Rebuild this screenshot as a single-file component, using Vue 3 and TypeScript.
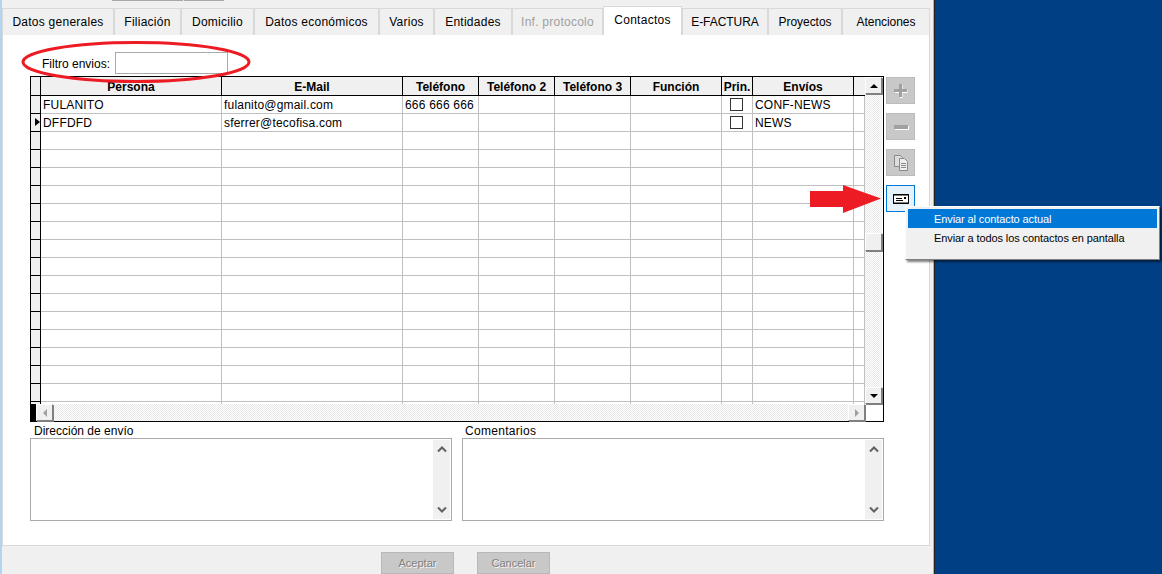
<script setup lang="ts">
interface Contact {
  persona: string
  email: string
  tel: string
  envios: string
  check: boolean
  current: boolean
}

const tabs = [
  { label: 'Datos generales', width: 112 },
  { label: 'Filiación', width: 67 },
  { label: 'Domicilio', width: 73 },
  { label: 'Datos económicos', width: 125 },
  { label: 'Varios', width: 55 },
  { label: 'Entidades', width: 78 },
  { label: 'Inf. protocolo', width: 91, disabled: true },
  { label: 'Contactos', width: 79, active: true },
  { label: 'E-FACTURA', width: 86, tight: true },
  { label: 'Proyectos', width: 74, tight: true },
  { label: 'Atenciones', width: 88, tight: true },
]

const headers = ['Persona', 'E-Mail', 'Teléfono', 'Teléfono 2', 'Teléfono 3', 'Función', 'Prin.', 'Envíos', '']

const filled: Contact[] = [
  { persona: 'FULANITO', email: 'fulanito@gmail.com', tel: '666 666 666', envios: 'CONF-NEWS', check: true, current: false },
  { persona: 'DFFDFD', email: 'sferrer@tecofisa.com', tel: '', envios: 'NEWS', check: true, current: true },
]
const blank: Contact = { persona: '', email: '', tel: '', envios: '', check: false, current: false }
const rows: Contact[] = [...filled, ...Array.from({ length: 16 }, () => blank)]
</script>

<template>
  <div class="screen">
    <div class="win">
      <div class="topbits"><span class="bit a"></span><span class="bit b"></span></div>
      <div class="tabbar">
        <div
          v-for="t in tabs"
          :key="t.label"
          class="tab"
          :class="{ active: t.active, disabled: t.disabled, tight: t.tight }"
          :style="{ width: t.width + 'px' }"
        >{{ t.label }}</div>
      </div>

      <div class="panel">
        <div class="filter">
          <label class="filter-label">Filtro envios:</label>
          <div class="filter-input"></div>
        </div>

        <div class="middle">
          <div class="gridbox">
            <div class="table">
              <div class="cols head">
                <div class="ind"></div>
                <div v-for="(h, i) in headers" :key="i" class="hcell">{{ h }}</div>
              </div>
              <div v-for="(r, i) in rows" :key="i" class="cols row">
                <div class="ind"><i v-if="r.current" class="pointer"></i></div>
                <div class="cell">{{ r.persona }}</div>
                <div class="cell">{{ r.email }}</div>
                <div class="cell">{{ r.tel }}</div>
                <div class="cell"></div>
                <div class="cell"></div>
                <div class="cell"></div>
                <div class="cell center"><i v-if="r.check" class="check"></i></div>
                <div class="cell">{{ r.envios }}</div>
                <div class="cell"></div>
              </div>
            </div>
            <div class="vscroll">
              <div class="sbtn"><i class="tri up"></i></div>
              <div class="track first"></div>
              <div class="sbtn thumb"></div>
              <div class="track"></div>
              <div class="sbtn"><i class="tri down"></i></div>
            </div>
            <div class="hscroll">
              <div class="hblack"></div>
              <div class="sbtn h"><i class="tri left"></i></div>
              <div class="track"></div>
              <div class="sbtn h"><i class="tri right"></i></div>
            </div>
            <div class="corner"></div>
          </div>

          <div class="side">
            <button class="sidebtn">
              <svg width="16" height="16" viewBox="0 0 16 16">
                <path d="M7 2h2.500v5h5v3h-5v5H7v-5H2V7h5z" fill="#fff" />
                <path d="M6 1h3v5h5v3H9v5H6V9H1V6h5z" fill="#a0a0a0" />
              </svg>
            </button>
            <button class="sidebtn">
              <svg width="16" height="6" viewBox="0 0 16 6">
                <rect x="2" y="2" width="14" height="4" fill="#fff" />
                <rect x="1" y="1" width="14" height="4" fill="#a0a0a0" />
              </svg>
            </button>
            <button class="sidebtn">
              <svg width="16" height="16" viewBox="0 0 16 16">
                <path d="M1.500.5h6l2 2v9h-8z" fill="#ddd" stroke="#8a8a8a" />
                <path d="M6.500 3.500h5l3 3v9h-8z" fill="#eee" stroke="#8a8a8a" />
                <path d="M8 8.500h5M8 10.500h5M8 12.500h5" stroke="#8a8a8a" />
              </svg>
            </button>
            <button class="sidebtn send">
              <svg width="16" height="10" viewBox="0 0 16 10">
                <path d="M.5.500h15v9H.5z" fill="#fff" stroke="#000" />
                <path d="M0 1h16M0 9h16" stroke="#000" />
                <rect x="11" y="3" width="2" height="2" fill="#000" />
                <path d="M3 4.500h6M3 6.500h7" stroke="#000" />
              </svg>
            </button>
          </div>
        </div>

        <div class="memos">
          <div class="memo">
            <div class="memo-label">Dirección de envío</div>
            <div class="memo-box">
              <div class="memo-bar">
                <svg width="10" height="7" viewBox="0 0 10 7"><path d="M1 5.500l4-4 4 4" fill="none" stroke="#606060" stroke-width="2" /></svg>
                <svg width="10" height="7" viewBox="0 0 10 7"><path d="M1 1.500l4 4 4-4" fill="none" stroke="#606060" stroke-width="2" /></svg>
              </div>
            </div>
          </div>
          <div class="memo">
            <div class="memo-label">Comentarios</div>
            <div class="memo-box">
              <div class="memo-bar">
                <svg width="10" height="7" viewBox="0 0 10 7"><path d="M1 5.500l4-4 4 4" fill="none" stroke="#606060" stroke-width="2" /></svg>
                <svg width="10" height="7" viewBox="0 0 10 7"><path d="M1 1.500l4 4 4-4" fill="none" stroke="#606060" stroke-width="2" /></svg>
              </div>
            </div>
          </div>
        </div>
      </div>

      <div class="actions">
        <button class="action">Aceptar</button>
        <button class="action">Cancelar</button>
      </div>
    </div>

    <div class="desktop"></div>

    <svg class="ellipse" width="232" height="44" viewBox="0 0 232 44">
      <ellipse cx="115" cy="21" rx="113" ry="19.500" fill="none" stroke="#ed1c24" stroke-width="3" />
    </svg>

    <svg class="arrow" width="74" height="30" viewBox="0 0 74 30">
      <path d="M1 6h33V0l38 13.500L34 28v-6H1z" fill="#ed1c24" />
    </svg>

    <div class="menu">
      <div class="menu-item selected">Enviar al contacto actual</div>
      <div class="menu-item">Enviar a todos los contactos en pantalla</div>
    </div>
  </div>
</template>

<style>
html,
body {
  margin: 0;
  padding: 0;
}
</style>

<style scoped>
.screen {
  position: relative;
  display: flex;
  width: 1162px;
  height: 574px;
  overflow: hidden;
  font-family: "Liberation Sans", Arial, sans-serif;
  font-size: 12px;
  color: #000;
}
.win {
  box-sizing: border-box;
  width: 935px;
  height: 574px;
  flex: none;
  background: #f0f0f0;
  border-left: 2px solid #b4d4f4;
  border-right: 1px solid #222;
  box-shadow: inset -1px 0 #7cc0ec;
}
.desktop {
  flex: 1;
  background: #003f83;
}
.topbits {
  display: flex;
  gap: 1px;
  height: 1px;
  padding-left: 110px;
}
.bit {
  height: 1px;
  background: #a8a8a8;
}
.bit.a { width: 71px; }
.bit.b { width: 40px; }
.tabbar {
  display: flex;
  align-items: flex-end;
  height: 34px;
}
.tab {
  box-sizing: border-box;
  flex: none;
  height: 27px;
  padding-top: 6px;
  text-align: center;
  white-space: nowrap;
  letter-spacing: 0.25px;
  line-height: 14px;
  background: #f0f0f0;
  border: 1px solid #d9d9d9;
  border-bottom: 0;
}
.tab.tight {
  letter-spacing: -0.05px;
}
.tab.active {
  height: 29px;
  background: #fff;
}
.tab.disabled {
  color: #a0a0a0;
}
.panel {
  box-sizing: border-box;
  width: 928px;
  height: 511px;
  padding: 17px 0 0 27px;
  background: #fff;
  border: 1px solid #d9d9d9;
  border-top: 0;
}
.filter {
  display: flex;
  align-items: center;
  height: 22px;
  padding-left: 12px;
  margin-bottom: 2px;
}
.filter-label {
  width: 73px;
  padding-top: 2px;
}
.filter-input {
  box-sizing: border-box;
  width: 113px;
  height: 22px;
  border: 1px solid #aaa;
  background: #fff;
}
.middle {
  display: flex;
  gap: 2px;
}
.gridbox {
  box-sizing: border-box;
  display: grid;
  grid-template-columns: 834px 18px;
  grid-template-rows: 327px 17px;
  width: 854px;
  height: 346px;
  border: 1px solid #000;
}
.table {
  overflow: hidden;
}
.cols {
  display: grid;
  grid-template-columns: 10px 181px 181px 76px 76px 76px 91px 31px 101px 11px;
}
.head {
  grid-template-rows: 19px;
  height: 19px;
  background: #f0f0f0;
}
.ind {
  box-sizing: border-box;
  position: relative;
  background: #f0f0f0;
  border-right: 1px solid #000;
  border-bottom: 1px solid #000;
}
.hcell {
  box-sizing: border-box;
  border-right: 1px solid #000;
  border-bottom: 1px solid #000;
  font-weight: 700;
  text-align: center;
  line-height: 20px;
}
.hcell:last-child {
  border-right: 0;
}
.row {
  grid-template-rows: 18px;
  height: 18px;
}
.cell {
  box-sizing: border-box;
  padding: 1px 0 0 2px;
  line-height: 16px;
  letter-spacing: 0.2px;
  white-space: nowrap;
  border-right: 1px solid #c0c0c0;
  border-bottom: 1px solid #c0c0c0;
}
.cell.center {
  display: flex;
  align-items: center;
  justify-content: center;
  padding: 0 1px 0 0;
}
.check {
  display: block;
  box-sizing: border-box;
  width: 13px;
  height: 13px;
  border: 1px solid #333;
  background: #fff;
}
.pointer {
  position: absolute;
  left: 4px;
  top: 4px;
  width: 0;
  height: 0;
  border-left: 5px solid #000;
  border-top: 4px solid transparent;
  border-bottom: 4px solid transparent;
}
.track {
  flex: 1;
  background-color: #fff;
  background-image: conic-gradient(#e8e8e8 25%, #fff 0 50%, #e8e8e8 0 75%, #fff 0);
  background-size: 2px 2px;
}
.track.first {
  flex: none;
  height: 139px;
}
.vscroll {
  display: flex;
  flex-direction: column;
  width: 17px;
  height: 327px;
}
.sbtn {
  box-sizing: border-box;
  position: relative;
  flex: none;
  width: 17px;
  height: 17px;
  background: #f0f0f0;
  border: 1px solid;
  border-color: #fff #808080 #808080 #fff;
  box-shadow: 1px 1px 0 #808080;
  display: flex;
  align-items: center;
  justify-content: center;
}
.sbtn.thumb {
  height: 18px;
}
.sbtn.h {
  width: 17px;
}
.tri {
  display: block;
  width: 0;
  height: 0;
}
.tri.up {
  border-left: 4px solid transparent;
  border-right: 4px solid transparent;
  border-bottom: 4px solid #000;
}
.tri.down {
  border-left: 4px solid transparent;
  border-right: 4px solid transparent;
  border-top: 4px solid #000;
}
.tri.left {
  border-top: 4px solid transparent;
  border-bottom: 4px solid transparent;
  border-right: 4px solid #a0a0a0;
}
.tri.right {
  border-top: 4px solid transparent;
  border-bottom: 4px solid transparent;
  border-left: 4px solid #a0a0a0;
}
.hscroll {
  display: flex;
  height: 17px;
}
.hblack {
  flex: none;
  width: 5px;
  background: #000;
}
.corner {
  background: #fff;
}
.side {
  display: flex;
  flex-direction: column;
  gap: 9px;
  padding-top: 1px;
}
.sidebtn {
  box-sizing: border-box;
  display: flex;
  align-items: center;
  justify-content: center;
  width: 29px;
  height: 27px;
  padding: 0;
  background: #c8c8c8;
  border: 1px solid #bcbcbc;
}
.sidebtn.send {
  background: #e5f1fb;
  border: 1px solid #0078d7;
}
.memos {
  display: grid;
  grid-template-columns: 422px 422px;
  gap: 10px;
  margin-top: 2px;
}
.memo-label {
  height: 14px;
  padding-left: 4px;
  line-height: 14px;
}
.memo:last-child .memo-label {
  padding-left: 3px;
  letter-spacing: 0.3px;
}
.memo-box {
  box-sizing: border-box;
  display: flex;
  justify-content: flex-end;
  height: 83px;
  padding: 1px;
  border: 1px solid #aaa;
  background: #fff;
}
.memo-bar {
  display: flex;
  flex-direction: column;
  align-items: center;
  justify-content: space-between;
  box-sizing: border-box;
  width: 17px;
  padding: 6px 0;
  background: #f0f0f0;
}
.actions {
  display: flex;
  gap: 23px;
  padding: 6px 0 0 379px;
}
.action {
  box-sizing: border-box;
  width: 73px;
  height: 22px;
  padding: 0;
  background: #c8c8c8;
  border: 1px solid #b8b8b8;
  font: inherit;
  font-size: 11px;
  color: #808080;
  text-shadow: 1px 1px 0 #f4f4f4;
}
.ellipse {
  position: absolute;
  left: 21px;
  top: 41px;
}
.arrow {
  position: absolute;
  left: 809px;
  top: 185px;
}
.menu {
  position: absolute;
  left: 905px;
  top: 206px;
  box-sizing: border-box;
  width: 255px;
  height: 54px;
  padding: 2px;
  background: #f0f0f0;
  border: 1px solid;
  border-color: #fff #808080 #808080 #fff;
  box-shadow: 2px 2px 2px rgba(0, 0, 0, 0.5);
  font-size: 11px;
}
.menu-item {
  height: 19px;
  padding-left: 26px;
  line-height: 21px;
  white-space: nowrap;
  letter-spacing: -0.1px;
}
.menu-item.selected {
  background: #0078d7;
  color: #fff;
}
</style>
